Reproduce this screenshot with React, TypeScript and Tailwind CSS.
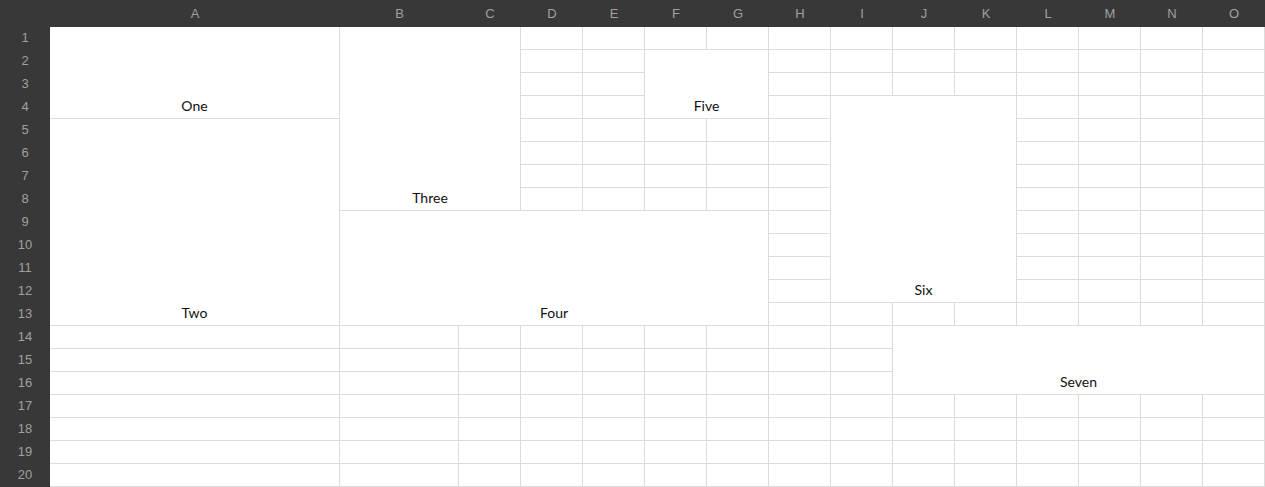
import React from 'react';

const cols = ['A', 'B', 'C', 'D', 'E', 'F', 'G', 'H', 'I', 'J', 'K', 'L', 'M', 'N', 'O'];
const rows = Array.from({ length: 20 }, (_, i) => i + 1);

// merged ranges: [col, row, colSpan, rowSpan, text]  (1-based col/row)
const merges: [number, number, number, number, string][] = [
  [1, 1, 1, 4, 'One'],
  [1, 5, 1, 9, 'Two'],
  [2, 1, 2, 8, 'Three'],
  [2, 9, 6, 5, 'Four'],
  [6, 2, 2, 3, 'Five'],
  [9, 4, 3, 9, 'Six'],
  [10, 14, 6, 3, 'Seven'],
];

const covered = (c: number, r: number) =>
  merges.some(([mc, mr, cs, rs]) => c >= mc && c < mc + cs && r >= mr && r < mr + rs);

const App: React.FC = () => {
  const cells: React.ReactNode[] = [];
  merges.forEach(([c, r, cs, rs, text]) => {
    cells.push(
      <div
        key={text}
        className="bg-white border-r border-b border-[#dcdcdc] flex items-end justify-center pb-[4px] text-[14px] leading-[17px] text-[#111]"
        style={{ gridColumn: `${c + 1} / span ${cs}`, gridRow: `${r + 1} / span ${rs}` }}
      >
        {text}
      </div>
    );
  });
  rows.forEach((r) => {
    cols.forEach((_, ci) => {
      const c = ci + 1;
      if (covered(c, r)) return;
      cells.push(
        <div
          key={`${c}-${r}`}
          className="bg-white border-r border-b border-[#dcdcdc]"
          style={{ gridColumn: c + 1, gridRow: r + 1 }}
        />
      );
    });
  });

  return (
    <div className="w-[1265px] h-[487px] bg-[#383838] overflow-hidden font-['Lato','Liberation_Sans',sans-serif]">
      <div className="grid grid-cols-[50px_290px_119px_repeat(13,62px)] grid-rows-[27px_repeat(20,23px)]">
        <div className="bg-[#383838]" />
        {cols.map((c) => (
          <div
            key={c}
            className="flex items-center justify-center text-[13px] text-[#a0a0a0] font-['Liberation_Sans',sans-serif]"
          >
            {c}
          </div>
        ))}
        {rows.map((r) => (
          <div
            key={r}
            className="col-start-1 flex items-center justify-center pb-[1px] text-[13px] text-[#a0a0a0] font-['Liberation_Sans',sans-serif]"
            style={{ gridRow: r + 1 }}
          >
            {r}
          </div>
        ))}
        {cells}
      </div>
    </div>
  );
};

export default App;
